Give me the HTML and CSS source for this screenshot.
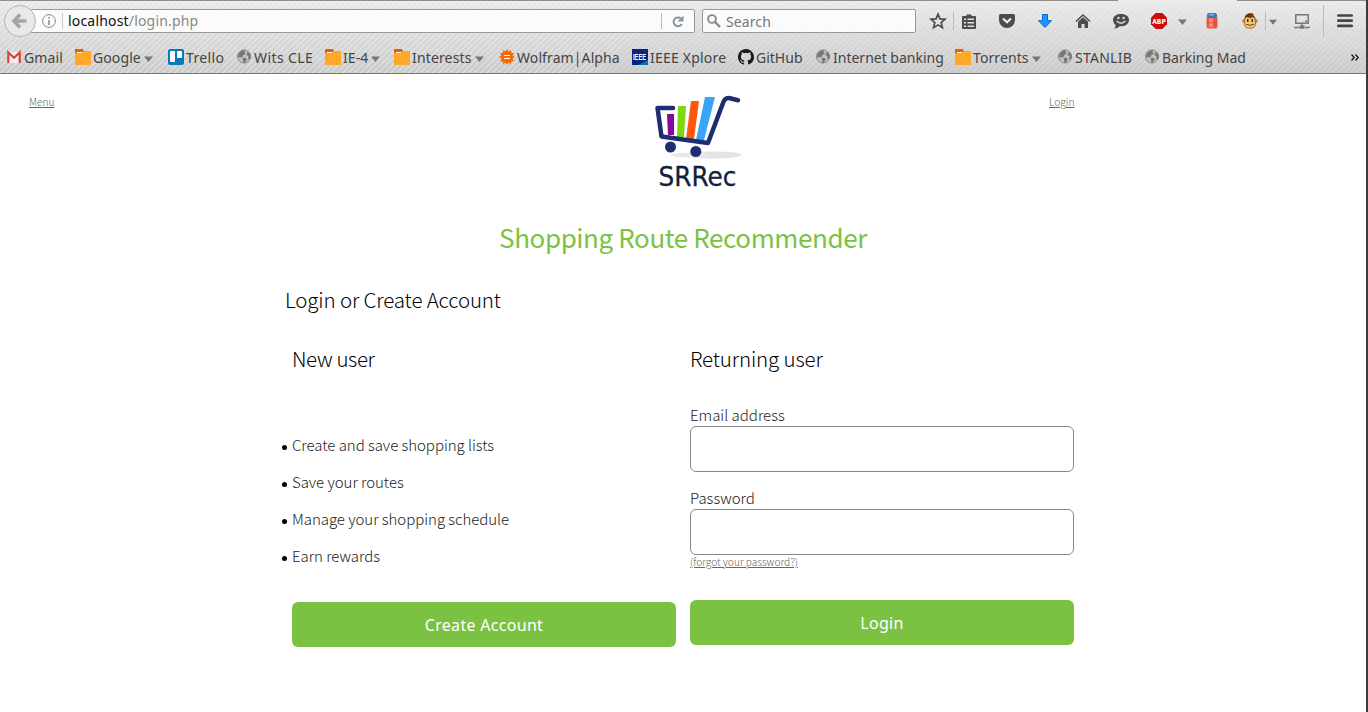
FILE: index.html
```html
<!DOCTYPE html>
<html lang="en">
<head>
<meta charset="utf-8">
<title>Shopping Route Recommender</title>
<link rel="stylesheet" href="styles.css">
</head>
<body>
<svg class="defs" width="0" height="0">
  <symbol id="folder" viewBox="0 0 16 16"><path fill="#e66000" d="M0 0h8l1 2v3H0z"/><path fill="#ffa726" d="M0 4h7l1-2h8v14H0z"/><path fill="#fff" d="M2 3h5v1H2z"/></symbol>
  <symbol id="globe" viewBox="0 0 16 16"><circle cx="7" cy="7.500" r="6.600" fill="#c4c4c4" stroke="#858585" stroke-width=".9"/><path fill="#777" d="M2 4l3-2.500 3-.5-.5 2L9 4.500 6.500 6l-1 2-3 .5L.8 8zM9.500 2.500l3 1.500 1.300 3.500-1 3-1.800-.8L11.500 7 9 6l1.500-1.500zM5.500 9l3-.3 1.500 2-1.500 1.500L8 14l-1.800-.6L6 11.500z"/></symbol>
  <symbol id="caret" viewBox="0 0 9 6"><path fill="#777" d="M0 .5h9L4.500 6z"/></symbol>
</svg>
<div class="window">
  <header class="chrome">
    <div class="active-tab"></div>
    <div class="navbar">
      <div class="back"><svg width="32" height="32" viewBox="0 0 32 32"><circle cx="16" cy="16" r="15.500" fill="#e9e9e9" stroke="#b5b5b5"/><path d="M22.500 16H11M16 9.500L10 16l6 6.500" fill="none" stroke="#a5a5a5" stroke-width="3.600"/></svg></div>
      <div class="urlbar">
        <svg class="info" width="14" height="14" viewBox="0 0 14 14"><circle cx="7" cy="7" r="6.400" fill="none" stroke="#888"/><path d="M7 3v1.500M7 6v5" stroke="#888" stroke-width="1.500"/></svg>
        <div class="url"><span class="host">localhost</span><span>/login.php</span></div>
        <div class="reload"><svg width="12" height="13" viewBox="0 0 12 13"><path d="M9 3.600A4.400 4.400 0 1 0 9.800 9" fill="none" stroke="#8796a5" stroke-width="2"/><path fill="#8796a5" d="M11.500.5v6h-6z"/></svg></div>
      </div>
      <div class="search"><svg width="14" height="14" viewBox="0 0 14 14"><circle cx="5" cy="5" r="3.900" fill="none" stroke="#888" stroke-width="1.900"/><path d="M8 8l5 5" stroke="#888" stroke-width="2.400"/></svg><span>Search</span></div>
      <div class="tools">
        <svg class="t-star" width="16" height="16" viewBox="0 0 16 16"><path d="M8 1.200l2 4.700 5 .4-3.800 3.300 1.200 5L8 11.900l-4.400 2.700 1.200-5L1 6.300l5-.4z" fill="none" stroke="#4c4c4c" stroke-width="1.700"/></svg>
        <i class="sep s1"></i>
        <svg class="t-list" width="14" height="15" viewBox="0 0 14 15"><path fill="#4c4c4c" fill-rule="evenodd" d="M4.500 2V.5h5V2H13q1 0 1 1v11q0 1-1 1H1q-1 0-1-1V3q0-1 1-1zM2 4.500V6h2V4.500zm3.500 0V6H12V4.500zM2 8v1.500h2V8zm3.500 0v1.500H12V8zM2 11.500V13h2v-1.500zm3.500 0V13H12v-1.500z"/></svg>
        <svg class="t-pocket" width="16" height="14" viewBox="0 0 16 14"><path fill="#4c4c4c" d="M1.500 0h13Q16 0 16 1.500V6a8 8 0 0 1-16 0V1.500Q0 0 1.500 0z"/><path d="M4 4.500l4 3.800 4-3.800" fill="none" stroke="#eee" stroke-width="2"/></svg>
        <svg class="t-down" width="14" height="14" viewBox="0 0 14 14"><path d="M4.500.5h5v6.200h4L7 13.500.5 6.700h4z" fill="#1b96ff" stroke="#0769cc"/></svg>
        <svg class="t-home" width="16" height="14" viewBox="0 0 16 14"><path d="M1 7.500L8 1l7 6.500" fill="none" stroke="#4c4c4c" stroke-width="1.600"/><path fill="#4c4c4c" d="M3 7.800L8 3.200l5 4.600V14H9.500v-4h-3v4H3z"/></svg>
        <svg class="t-chat" width="16" height="15" viewBox="0 0 16 15"><path fill="#4c4c4c" d="M8 0c5 0 8 2.600 8 6s-3 6.300-8 6.300l-1.500-.1Q5 14.600 1 14.500q2-1.500 1.500-3.500Q0 9 0 6c0-3.400 3-6 8-6z"/><path d="M3.700 7q4.300 4.500 8.600 0" fill="none" stroke="#ddd" stroke-width="1.500"/><circle cx="5.400" cy="4" r="1.200" fill="#ddd"/><circle cx="10.600" cy="4" r="1.200" fill="#ddd"/></svg>
        <svg class="t-abp" width="16" height="16" viewBox="0 0 16 16"><path fill="#c70d0d" d="M4.700 0h6.600L16 4.700v6.600L11.300 16H4.700L0 11.300V4.700z"/><text x="8" y="10.800" text-anchor="middle" textLength="13.500" lengthAdjust="spacingAndGlyphs" class="abp">ABP</text></svg>
        <svg class="t-c1" width="9" height="6"><use href="#caret"/></svg>
        <svg class="t-jar" width="12" height="16" viewBox="0 0 12 16"><rect x=".5" y="3" width="11" height="12.500" rx="2.500" fill="#e9573f"/><path fill="#ff8a74" d="M3 5.500h4v8.500H3z"/><path fill="#d94c38" d="M1 9.500h10v.8H1z"/><rect x="1" y="0" width="10" height="5" rx="2" fill="#3278c8"/><path fill="#72b5ef" d="M3 1h5v1.500H3z"/></svg>
        <svg class="t-monkey" width="16" height="16" viewBox="0 0 16 16"><path fill="#6b3508" d="M3 3l2-2 3-1 4 1-1 1 2 2 1 4H2z"/><circle cx="2" cy="8" r="2" fill="#d48b3a"/><circle cx="14" cy="8" r="2" fill="#d48b3a"/><path fill="#f3c878" stroke="#90561e" stroke-width=".8" d="M3 5q2.500-2 5 0 2.500-2 5 0l.4 4q1.500 6-5.400 6.300Q1 15 2.600 9z"/><path fill="#243d18" d="M5 6h1.500v3H5zm4.500 0H11v3H9.500z"/><path d="M4 11.300q4 2 8 0" stroke="#713c0f" fill="none"/></svg>
        <i class="sep s2"></i>
        <svg class="t-c2" width="8" height="6" viewBox="0 0 9 6"><path fill="#777" d="M0 .5h9L4.500 6z"/></svg>
        <svg class="t-screen" width="16" height="15" viewBox="0 0 16 15"><path d="M1.800.8h12.400v8.400H1.800zM8 9v5M0 13.500h5M11 13.500h5" fill="none" stroke="#777" stroke-width="1.500"/><path fill="#777" d="M5.500 11.500h5v3.300h-5zM11 6.500h2v1.500h-2z"/></svg>
        <i class="sep s3"></i>
        <svg class="t-menu" width="16" height="14" viewBox="0 0 16 14"><path d="M1.300 1.500h13.400M1.300 6.700h13.400M1.300 11.900h13.400" stroke="#454545" stroke-width="2.700" stroke-linecap="round"/></svg>
      </div>
    </div>
    <nav class="bookmarks">
      <a class="bm w68 i17"><svg width="14" height="12" viewBox="0 0 14 12"><path fill="#eee" d="M1 1h12v11H1z"/><path d="M1.300 12V1.500L7 6.700l5.700-5.200V12" fill="none" stroke="#d54538" stroke-width="2.200"/></svg><span class="x-gmail">Gmail</span></a>
      <a class="bm w93"><svg width="16" height="16"><use href="#folder"/></svg><span class="x-google">Google</span><svg class="dd" width="9" height="6"><use href="#caret"/></svg></a>
      <a class="bm w69"><svg width="16" height="16" viewBox="0 0 16 16"><rect width="16" height="16" rx="2" fill="#0779bf"/><rect x="2" y="2" width="5" height="11" rx=".7" fill="#fff"/><rect x="9" y="2" width="5" height="7" rx=".7" fill="#fff"/></svg><span class="x-trello">Trello</span></a>
      <a class="bm w88 i17"><svg width="16" height="16"><use href="#globe"/></svg><span class="x-wits">Wits CLE</span></a>
      <a class="bm w69"><svg width="16" height="16"><use href="#folder"/></svg><span class="x-ie4">IE-4</span><svg class="dd" width="9" height="6"><use href="#caret"/></svg></a>
      <a class="bm w105"><svg width="16" height="16"><use href="#folder"/></svg><span class="x-int">Interests</span><svg class="dd" width="9" height="6"><use href="#caret"/></svg></a>
      <a class="bm w133"><svg width="16" height="16" viewBox="0 0 16 16"><path fill="#f96700" d="M8 0l1.500 2.600L12 1l.3 2.700 2.700.3-1.600 2.500L16 8l-2.600 1.500L15 12l-2.700.3L12 15l-2.500-1.600L8 16l-1.500-2.600L4 15l-.3-2.700L1 12l1.600-2.500L0 8l2.600-1.500L1 4l2.700-.3L4 1l2.500 1.600z"/><path stroke="#fff" d="M5 6.500h6M5 9.500h6" stroke-width="1.200"/></svg><span class="x-wolf">Wolfram|Alpha</span></a>
      <a class="bm w106"><svg width="16" height="16" viewBox="0 0 16 16"><path fill="#07277c" d="M0 0h16v16H0z"/><path fill="#0871a7" d="M6 16l10-5v5z"/><text class="ieee" x="7.500" y="11" text-anchor="middle" textLength="13" lengthAdjust="spacingAndGlyphs">IEEE</text></svg><span class="x-ieee">IEEE Xplore</span></a>
      <a class="bm w78"><svg width="16" height="16" viewBox="0 0 16 16"><path fill="#1b1817" d="M8 0C3.580 0 0 3.580 0 8c0 3.540 2.290 6.530 5.470 7.590.4.070.55-.17.55-.38v-1.490c-2.010.37-2.530-.49-2.690-.94-.09-.23-.48-.94-.82-1.130-.28-.15-.68-.52-.01-.53.63-.01 1.080.58 1.230.82.72 1.210 1.870.87 2.330.66.070-.52.280-.87.510-1.070-1.780-.2-3.640-.89-3.640-3.950 0-.87.310-1.590.82-2.150-.08-.2-.36-1.020.08-2.120 0 0 .67-.21 2.200.82a7.400 7.400 0 0 1 4 0c1.530-1.040 2.200-.82 2.200-.82.44 1.100.16 1.920.08 2.120.51.560.82 1.270.82 2.150 0 3.070-1.870 3.750-3.650 3.950.29.250.54.730.54 1.480v2.200c0 .21.15.460.55.380A8 8 0 0 0 8 0z"/></svg><span class="x-git">GitHub</span></a>
      <a class="bm w139 i17"><svg width="16" height="16"><use href="#globe"/></svg><span class="x-bank">Internet banking</span></a>
      <a class="bm w103"><svg width="16" height="16"><use href="#folder"/></svg><span class="x-torr">Torrents</span><svg class="dd" width="9" height="6"><use href="#caret"/></svg></a>
      <a class="bm w87 i17"><svg width="16" height="16"><use href="#globe"/></svg><span class="x-stan">STANLIB</span></a>
      <a class="bm w206 i17"><svg width="16" height="16"><use href="#globe"/></svg><span class="x-bark">Barking Mad</span></a>
      <svg class="more" width="8" height="7" viewBox="0 0 8 7"><path d="M.5.5l2.700 3-2.700 3M4.500.5l2.700 3-2.700 3" fill="none" stroke="#111" stroke-width="1.200"/></svg>
    </nav>
  </header>
  <main class="page">
    <div class="top">
      <a class="small menu">Menu</a>
      <svg class="logo" width="90" height="96" viewBox="0 0 90 96">
        <ellipse cx="61" cy="61" rx="28" ry="3.500" fill="#e4e4e4"/><ellipse cx="38" cy="61" rx="20" ry="2.500" fill="#e8e8e8"/>
        <path fill="#88089c" d="M14 20h7v21h-6z"/><path fill="#7fd60c" d="M25 12h8l-2 31h-7z"/><path fill="#ff5608" d="M38 7h8l-5 38h-8z"/><path fill="#38a5f6" d="M52 3h10L51 46h-8z"/>
        <path d="M20 14H4.500l4 28.500L55 49 70 9q2-6 7-4.800l8 2" fill="none" stroke="#1c2d72" stroke-width="4.500" stroke-linejoin="round" stroke-linecap="round"/>
        <circle cx="17.500" cy="53" r="5.500" fill="#1c2d72"/><circle cx="42.800" cy="57.500" r="5.500" fill="#1c2d72"/>
        <text class="logo-text" x="5.500" y="91.500" textLength="78" lengthAdjust="spacingAndGlyphs">SRRec</text>
      </svg>
      <a class="small login-link">Login</a>
    </div>
    <h1>Shopping Route Recommender</h1>
    <div class="content">
      <h2>Login or Create Account</h2>
      <div class="columns">
        <section class="new">
          <h3 class="h-new">New user</h3>
          <ul><li>Create and save shopping lists</li><li>Save your routes</li><li>Manage your shopping schedule</li><li>Earn rewards</li></ul>
          <button class="btn create">Create Account</button>
        </section>
        <section class="returning">
          <h3 class="h-ret">Returning user</h3>
          <label><span>Email address</span><input type="email"></label>
          <label><span>Password</span><input type="password"></label>
          <a class="small forgot">(forgot your password?)</a>
          <button class="btn signin">Login</button>
        </section>
      </div>
    </div>
  </main>
</div>
</body>
</html>
```
FILE: styles.css
```css
* { box-sizing: border-box; }
body { margin: 0; background: #fff; font-family: "Noto Sans CJK SC", "Noto Sans", sans-serif; color: #222; }
.defs { position: absolute; }
.window { height: 712px; border-right: 2px solid #3d3b39; overflow: hidden; }
svg { flex: none; display: block; overflow: visible; }

.chrome { height: 74px; position: relative; border-top: 1px solid #928e8f; border-bottom: 1px solid #777; font-family: "Noto Sans", sans-serif;
  background: repeating-linear-gradient(135deg, rgba(255,255,255,.3) 0 1px, transparent 1px 4.240px), linear-gradient(#e9e9e9, #cbcbcb); }
.active-tab { position: absolute; top: -1px; left: 1118px; width: 119px; height: 1px; background: #ececec; }
.navbar { display: flex; height: 40px; align-items: center; padding-left: 4px; }
.back { width: 32px; z-index: 1; }
.urlbar { width: 664px; height: 24px; margin-left: -5px; border: 1px solid #999; border-radius: 0 2px 2px 0; background: rgba(255,255,255,.85); display: flex; align-items: center; padding-left: 10px; }
.url { height: 16px; line-height: 16px; border-left: 1px solid #ccc; margin-left: 6px; padding-left: 5px; font-size: 14px; letter-spacing: .18px; color: #888; flex: 1; white-space: nowrap; }
.host { color: #111; }
.reload { width: 33px; height: 16px; border-left: 1px solid #bbb; padding: 2px 0 0 10px; }
.search { width: 214px; height: 24px; margin-left: 7px; border: 1px solid #999; border-radius: 2px; background: rgba(255,255,255,.85); display: flex; align-items: center; gap: 5px; padding-left: 4px; font-size: 14px; letter-spacing: .1px; color: #777; }
.tools { display: flex; align-items: center; margin-left: 14px; }
.sep { width: 1px; height: 18px; background: #bbb; }
.s1 { margin: 0 8px 0 7px; }
.t-pocket { margin-left: 23px; } .t-down { margin-left: 23px; } .t-home { margin-left: 23px; } .t-chat { margin-left: 22px; }
.t-abp { margin-left: 22px; } .t-c1 { margin: 2px 0 0 11px; } .t-jar { margin-left: 19px; } .t-monkey { margin-left: 24px; }
.s2 { margin-left: 7px; } .t-c2 { margin: 2px 0 0 3px; } .t-screen { margin-left: 17px; } .s3 { margin: 0 13px; height: 32px; }
.abp { font: bold 7px "DejaVu Sans", sans-serif; fill: #fff; }
.ieee { font: bold 9px "Liberation Sans", sans-serif; fill: #fff; }
.bookmarks { display: flex; align-items: center; height: 32px; padding-left: 7px; font-size: 14px; color: #444; }
.bm { display: flex; align-items: center; flex: none; gap: 2px; height: 20px; white-space: nowrap; letter-spacing: .1px; }
.i17 { gap: 1px; }
.bm:first-child { gap: 3px; }
.dd { margin: 3px 0 0 1px; }
.x-trello { letter-spacing: .35px; } .x-wits { letter-spacing: .4px; } .x-ieee { letter-spacing: .2px; }
.x-git, .x-bank, .x-bark { letter-spacing: 0; } .x-stan { letter-spacing: .25px; } .x-int { letter-spacing: .15px; }
.w68 { width: 68px; } .w69 { width: 69px; } .w78 { width: 78px; } .w87 { width: 87px; } .w88 { width: 88px; } .w93 { width: 93px; }
.w103 { width: 103px; } .w105 { width: 105px; } .w106 { width: 106px; } .w133 { width: 133px; } .w139 { width: 139px; } .w206 { width: 206px; }

.top { display: flex; height: 139px; align-items: flex-start; padding-left: 29px; }
.small { font-size: 10.200px; line-height: 16px; font-weight: 300; color: #666; text-decoration: underline; white-space: nowrap; }
.menu { width: 624px; margin-top: 20px; }
.logo { margin-top: 20px; }
.login-link { margin: 20px 0 0 306px; }
.logo-text { font: 26.500px "DejaVu Sans", sans-serif; fill: #101f40; stroke: #101f40; stroke-width: .3px; }
h1, h2, h3 { margin: 0; white-space: nowrap; }
h1 { width: 1366px; height: 48px; line-height: 48px; text-align: center; font-size: 26px; letter-spacing: -.4px; font-weight: 400; color: #7cc242; }
.content { padding-left: 285px; }
h2, h3 { font-size: 20.500px; letter-spacing: -.14px; line-height: 32px; font-weight: 300; color: #000; }
h2 { margin-top: 22px; }
.h-new { letter-spacing: -.4px; }
.columns { display: flex; gap: 14px; padding: 27px 0 0 7px; }
.new, .returning { width: 384px; display: flex; flex-direction: column; align-items: flex-start; }
ul { list-style: none; margin: 52px 0 0 -11px; padding: 0; }
li { height: 37px; line-height: 37px; font-size: 15px; letter-spacing: -.04px; font-weight: 300; display: flex; align-items: center; gap: 5px; white-space: nowrap; }
li::before { content: ""; width: 5px; height: 5px; margin: 5px 0 0 1px; border-radius: 50%; background: #000; }
.btn { width: 384px; height: 45px; border: 0; border-radius: 6px; background: #7cc242; color: #fff; font: 16px "Noto Sans", sans-serif; letter-spacing: .3px; padding: 0; }
.create { margin-top: 28px; }
label { display: flex; flex-direction: column; align-items: flex-start; font-size: 15px; line-height: 22px; font-weight: 300; height: 83px; }
.h-ret { margin-bottom: 30px; }
input { width: 384px; height: 46px; border: 1px solid #888; border-radius: 6px; background: #fff; margin: 0; }
.forgot { margin-top: -16px; }
.signin { margin-top: 30px; }
```
